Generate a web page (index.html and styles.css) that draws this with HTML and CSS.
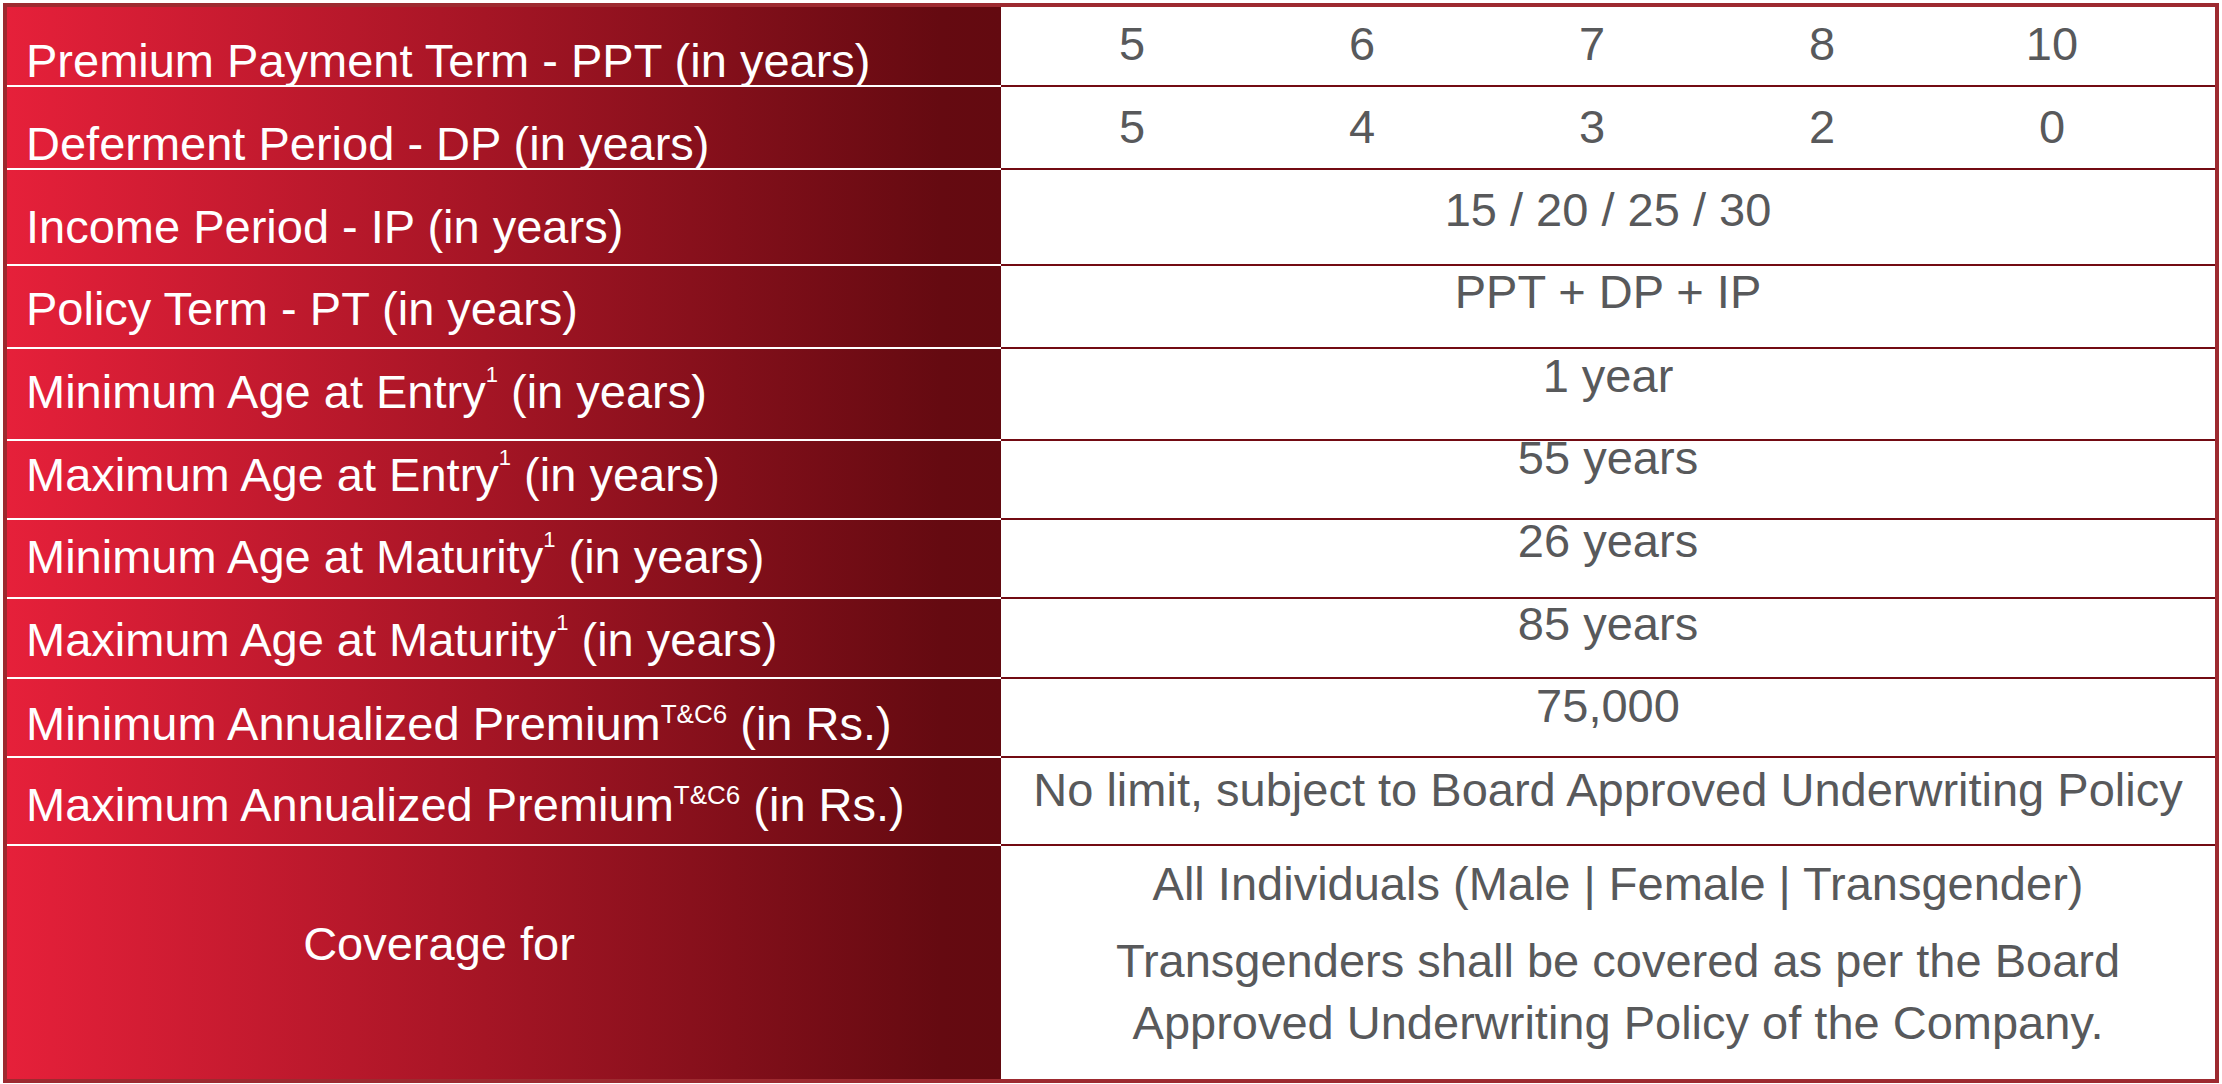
FILE: index.html
```html
<!DOCTYPE html>
<html lang="en">
<head>
<meta charset="utf-8">
<title>Plan Parameters</title>
<link rel="stylesheet" href="styles.css">
</head>
<body>
<div class="sheet">
  <div class="row r1">
    <div class="label">Premium Payment Term - PPT (in years)</div>
    <div class="value cols"><span>5</span><span>6</span><span>7</span><span>8</span><span>10</span></div>
  </div>
  <div class="row r2">
    <div class="label">Deferment Period - DP (in years)</div>
    <div class="value cols"><span>5</span><span>4</span><span>3</span><span>2</span><span>0</span></div>
  </div>
  <div class="row r3">
    <div class="label">Income Period - IP (in years)</div>
    <div class="value">15 / 20 / 25 / 30</div>
  </div>
  <div class="row r4">
    <div class="label">Policy Term - PT (in years)</div>
    <div class="value">PPT + DP + IP</div>
  </div>
  <div class="row r5">
    <div class="label">Minimum Age at Entry<sup class="sup1">1</sup> (in years)</div>
    <div class="value">1 year</div>
  </div>
  <div class="row r6">
    <div class="label">Maximum Age at Entry<sup class="sup1">1</sup> (in years)</div>
    <div class="value">55 years</div>
  </div>
  <div class="row r7">
    <div class="label">Minimum Age at Maturity<sup class="sup1">1</sup> (in years)</div>
    <div class="value">26 years</div>
  </div>
  <div class="row r8">
    <div class="label">Maximum Age at Maturity<sup class="sup1">1</sup> (in years)</div>
    <div class="value">85 years</div>
  </div>
  <div class="row r9">
    <div class="label">Minimum Annualized Premium<sup class="suptc">T&amp;C6</sup> (in Rs.)</div>
    <div class="value">75,000</div>
  </div>
  <div class="row r10">
    <div class="label">Maximum Annualized Premium<sup class="suptc">T&amp;C6</sup> (in Rs.)</div>
    <div class="value">No limit, subject to Board Approved Underwriting Policy</div>
  </div>
  <div class="row r11">
    <div class="label center">Coverage for</div>
    <div class="value cover">
      <p>All Individuals (Male | Female | Transgender)</p>
      <p class="second">Transgenders shall be covered as per the Board<br>Approved Underwriting Policy of the Company.</p>
    </div>
  </div>
</div>
</body>
</html>
```

FILE: styles.css
```css
html, body {
  margin: 0;
  padding: 0;
  background: #ffffff;
}

body {
  font-family: "Liberation Sans", Arial, sans-serif;
}

.sheet {
  box-sizing: border-box;
  width: 2216px;
  height: 1080px;
  margin: 3px;
  border: 4px solid #9d2a30;
  display: flex;
  flex-direction: column;
}

.row {
  display: grid;
  grid-template-columns: 994px 1fr;
  flex: none;
}

.label {
  box-sizing: border-box;
  background: linear-gradient(90deg, #e6203a 0%, #a51525 48%, #650a11 94%, #630a10 100%);
  color: #ffffff;
  font-size: 47px;
  line-height: 40px;
  padding-left: 19px;
  border-bottom: 2px solid #ffffff;
  white-space: nowrap;
}

.value {
  box-sizing: border-box;
  color: #58595b;
  font-size: 47px;
  line-height: 30px;
  text-align: center;
  border-bottom: 2px solid #730b13;
  white-space: nowrap;
}

.cols {
  display: grid;
  grid-template-columns: repeat(5, 230px);
  padding-left: 16px;
}

.cols span {
  display: block;
  text-align: center;
}

.sup1 {
  font-size: 22px;
  line-height: 0;
  vertical-align: 26px;
}

.suptc {
  font-size: 26px;
  line-height: 0;
  vertical-align: 17px;
}

/* row heights (including the 2px rule) and text offsets */
.r1 { height: 80px; }
.r1 .label { padding-top: 34px; }
.r1 .value { padding-top: 22px; }

.r2 { height: 83px; }
.r2 .label { padding-top: 37px; }
.r2 .value { padding-top: 25px; }

.r3 { height: 96px; }
.r3 .label { padding-top: 37px; }
.r3 .value { padding-top: 25px; }

.r4 { height: 83px; }
.r4 .label { padding-top: 23px; }
.r4 .value { padding-top: 11px; }

.r5 { height: 92px; }
.r5 .label { padding-top: 23px; }
.r5 .value { padding-top: 12px; }

.r6 { height: 79px; }
.r6 .label { padding-top: 14px; }
.r6 .value { padding-top: 2px; }

.r7 { height: 79px; }
.r7 .label { padding-top: 17px; }
.r7 .value { padding-top: 6px; }

.r8 { height: 80px; }
.r8 .label { padding-top: 21px; }
.r8 .value { padding-top: 10px; }

.r9 { height: 79px; }
.r9 .label { padding-top: 25px; }
.r9 .value { padding-top: 12px; }

.r10 { height: 88px; }
.r10 .label { padding-top: 27px; }
.r10 .value { padding-top: 17px; }

.r11 {
  flex: 1 1 auto;
}

.r11 .label,
.r11 .value {
  border-bottom: none;
}

.label.center {
  text-align: center;
  padding-left: 0;
  padding-right: 130px;
  padding-top: 78px;
}

.cover {
  padding-top: 7px;
  padding-left: 20px;
  line-height: 61.5px;
}

.cover p {
  margin: 0;
}

.cover p.second {
  margin-top: 15.5px;
}
```
